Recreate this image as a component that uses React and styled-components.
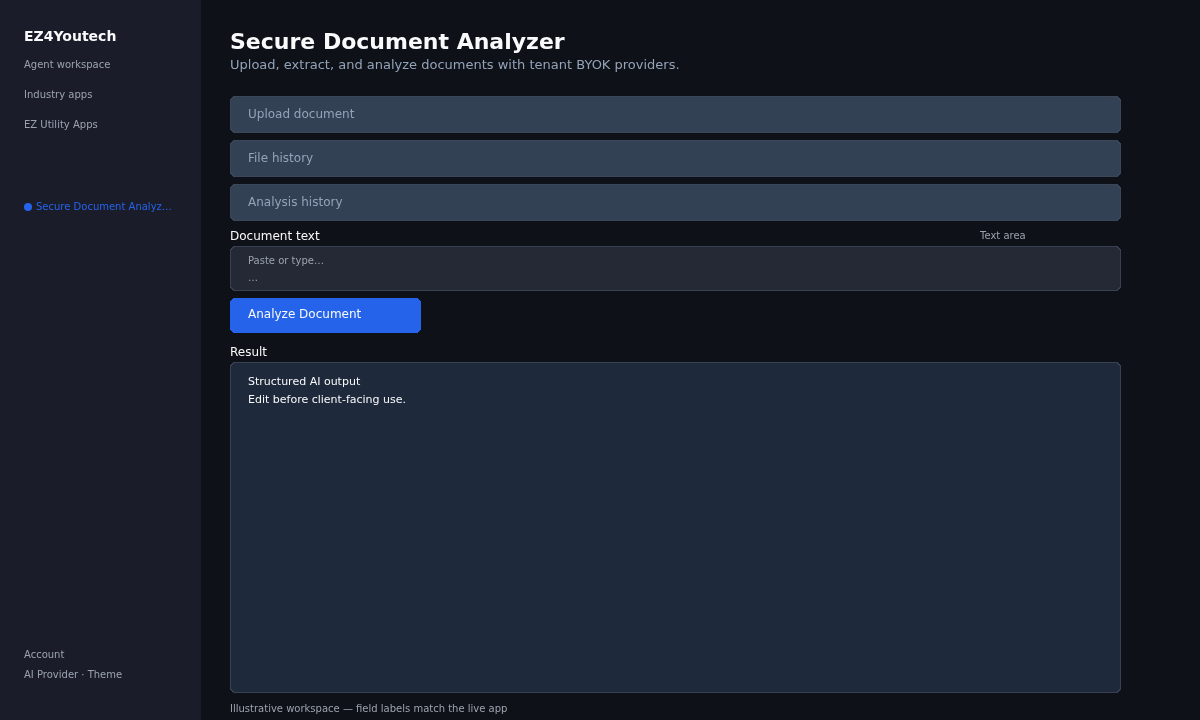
import React from "react";
import styled, { createGlobalStyle, css } from "styled-components";

const Global = createGlobalStyle`
  html, body { margin: 0; padding: 0; height: 100%; background: #0e1117; }
  body { font-family: "DejaVu Sans", sans-serif; }
`;

const stairs = css`
  clip-path: polygon(
    3px 0, calc(100% - 3px) 0, calc(100% - 3px) 1px, calc(100% - 2px) 1px, calc(100% - 2px) 2px, calc(100% - 1px) 2px, calc(100% - 1px) 3px, 100% 3px,
    100% calc(100% - 3px), calc(100% - 1px) calc(100% - 3px), calc(100% - 1px) calc(100% - 2px), calc(100% - 2px) calc(100% - 2px), calc(100% - 2px) calc(100% - 1px), calc(100% - 3px) calc(100% - 1px), calc(100% - 3px) 100%,
    3px 100%, 3px calc(100% - 1px), 2px calc(100% - 1px), 2px calc(100% - 2px), 1px calc(100% - 2px), 1px calc(100% - 3px), 0 calc(100% - 3px),
    0 3px, 1px 3px, 1px 2px, 2px 2px, 2px 1px, 3px 1px
  );
`;

const framed = css`
  position: relative; isolation: isolate; box-sizing: border-box;
  background: ${(p) => p.$line};
  ${stairs}
  &::before {
    content: ""; position: absolute; inset: 1px; z-index: -1;
    background: ${(p) => p.$fill};
    ${stairs}
  }
`;

const Page = styled.div`
  display: flex; width: 1200px; height: 720px; overflow: hidden; background: #0e1117;
  will-change: transform;
`;
const Sidebar = styled.aside`
  width: 201px; height: 720px; box-sizing: border-box; background: #1a1d29;
  padding: 28px 24px 39px; display: flex; flex-direction: column;
`;
const Brand = styled.div`
  font-size: 14px; font-weight: 700; color: #f9fafb; line-height: 16px; margin-bottom: 15px;
`;
const NavList = styled.nav`
  display: flex; flex-direction: column; gap: 18px;
`;
const NavItem = styled.div`
  font-size: 10px; line-height: 12px; color: #9ca3af; white-space: nowrap;
`;
const ActiveItem = styled.div`
  margin-top: 70px; display: flex; align-items: center; gap: 4px;
  font-size: 10px; line-height: 12px; color: #2563eb; white-space: nowrap;
`;
const Dot = styled.span`
  width: 8px; height: 8px; border-radius: 50%; background: #2563eb; flex: none;
`;
const SideFoot = styled.div`
  margin-top: auto; display: flex; flex-direction: column; gap: 8px;
`;
const Main = styled.main`
  flex: 1; padding: 29px 0 0 29px; display: flex; flex-direction: column; align-items: flex-start;
`;
const Title = styled.h1`
  margin: 0; font-size: 22px; line-height: 25px; font-weight: 700; color: #f9fafb;
`;
const Subtitle = styled.p`
  margin: 3px 0 0; font-size: 13px; line-height: 16px; color: #94a3b8;
`;
const Collapsibles = styled.div`
  margin-top: 23px; display: flex; flex-direction: column; gap: 7px;
`;
const Collapsible = styled.div`
  ${framed}
  width: 891px; height: 37px; padding: 0 18px 1px;
  display: flex; align-items: center;
  font-size: 12px; color: #94a3b8;
`;
const FieldHead = styled.div`
  width: 891px; display: flex; justify-content: space-between; align-items: center;
  margin-top: 8px; height: 14px; line-height: 14px;
`;
const FieldLabel = styled.span`
  font-size: 12px; color: #f9fafb;
`;
const FieldHint = styled.span`
  font-size: 10px; color: #9ca3af; width: 141px;
`;
const Input = styled.div`
  ${framed}
  margin-top: 3px; width: 891px; height: 45px; padding: 6px 18px 0;
  font-size: 10px; line-height: 17px; color: #9ca3af;
`;
const Button = styled.button`
  ${stairs}
  margin-top: 7px; width: 191px; height: 35px; border: 0; background: #2563eb;
  color: #f9fafb; font: 12px "DejaVu Sans", sans-serif; text-align: left; padding: 0 18px 3px;
`;
const ResultLabel = styled(FieldLabel)`
  margin-top: 12px; line-height: 14px; height: 14px;
`;
const ResultBox = styled.div`
  ${framed}
  margin-top: 3px; width: 891px; height: 331px; padding: 11px 18px;
  font-size: 11px; line-height: 18px; color: #f9fafb;
`;
const Footnote = styled.div`
  margin-top: 10px; font-size: 10px; line-height: 12px; color: #9ca3af;
`;

export default function App() {
  return (
    <Page>
      <Global />
      <Sidebar>
        <Brand>EZ4Youtech</Brand>
        <NavList>
          <NavItem>Agent workspace</NavItem>
          <NavItem>Industry apps</NavItem>
          <NavItem>EZ Utility Apps</NavItem>
        </NavList>
        <ActiveItem><Dot />Secure Document Analyz…</ActiveItem>
        <SideFoot>
          <NavItem>Account</NavItem>
          <NavItem>AI Provider · Theme</NavItem>
        </SideFoot>
      </Sidebar>
      <Main>
        <Title>Secure Document Analyzer</Title>
        <Subtitle>Upload, extract, and analyze documents with tenant BYOK providers.</Subtitle>
        <Collapsibles>
          <Collapsible $fill="#334155" $line="#3b4658">Upload document</Collapsible>
          <Collapsible $fill="#334155" $line="#3b4658">File history</Collapsible>
          <Collapsible $fill="#334155" $line="#3b4658">Analysis history</Collapsible>
        </Collapsibles>
        <FieldHead>
          <FieldLabel>Document text</FieldLabel>
          <FieldHint>Text area</FieldHint>
        </FieldHead>
        <Input $fill="#252935" $line="#374151">Paste or type…<br />…</Input>
        <Button>Analyze Document</Button>
        <ResultLabel>Result</ResultLabel>
        <ResultBox $fill="#1e293b" $line="#374151">Structured AI output<br />Edit before client-facing use.</ResultBox>
        <Footnote>Illustrative workspace — field labels match the live app</Footnote>
      </Main>
    </Page>
  );
}
